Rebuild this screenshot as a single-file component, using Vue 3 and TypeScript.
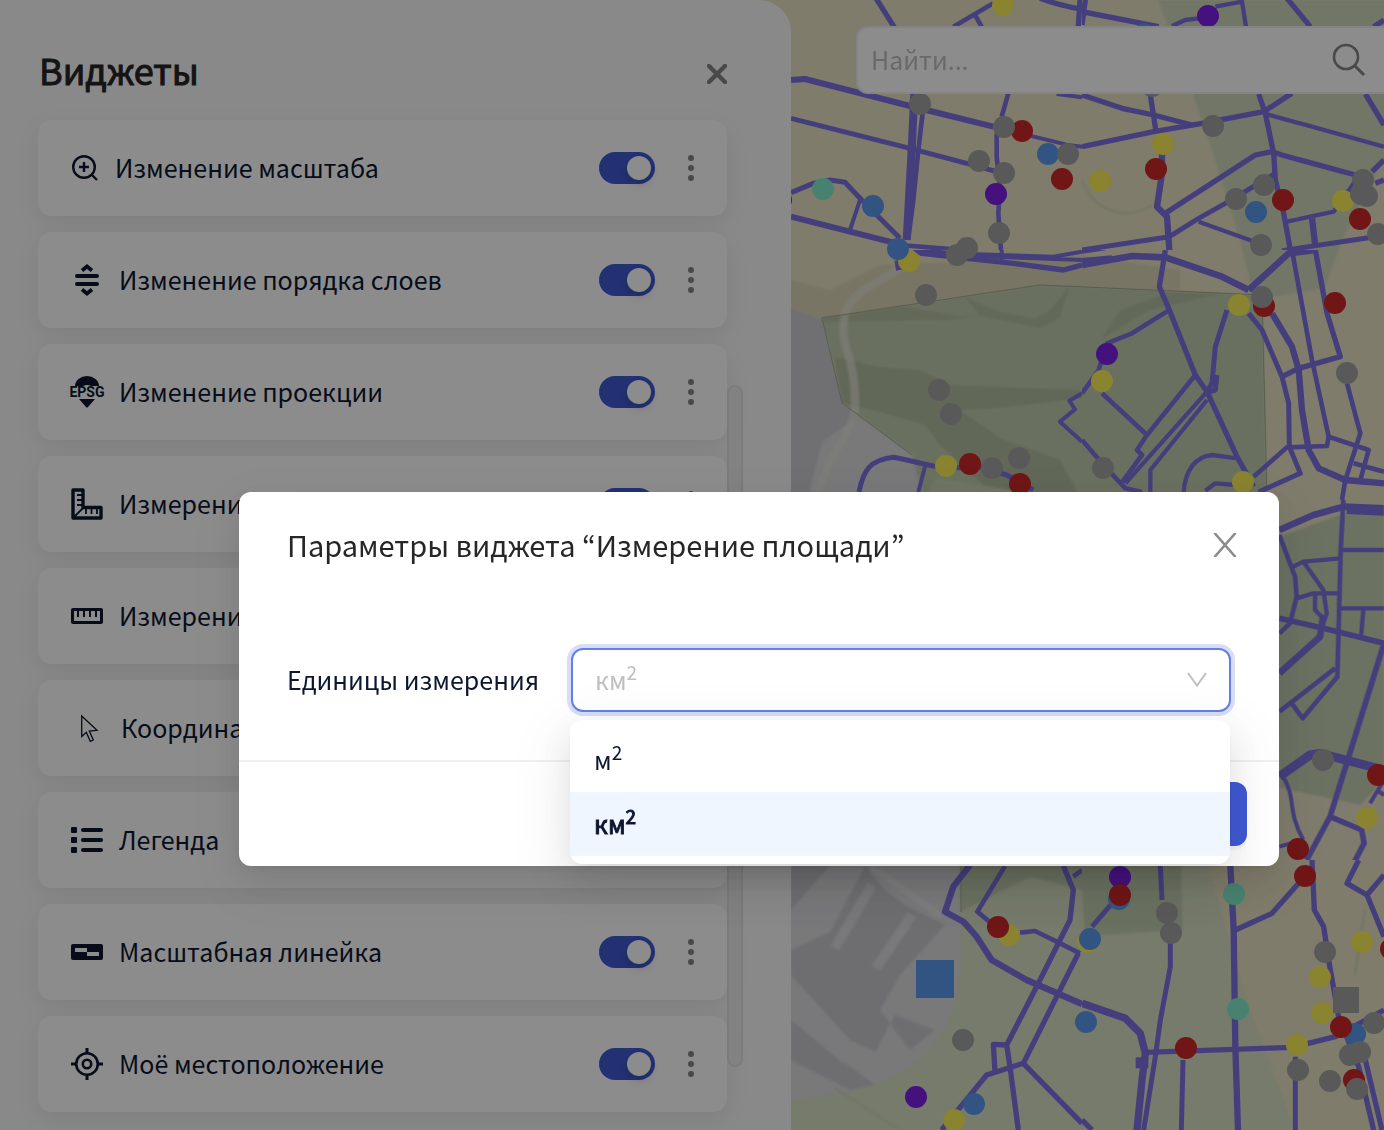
<script setup lang="ts">
import { ref } from 'vue'

interface Widget {
  id: string
  title: string
  iconWidth: number
  enabled: boolean
}

interface Road {
  w: number
  d: string
}

interface Tile {
  x: number
  y: number
  w: number
  h: number
  roads: Road[]
}

type Point = [number, number]

const widgets = ref<Widget[]>([
  { id: 'zoom', title: 'Изменение масштаба', iconWidth: 28, enabled: true },
  { id: 'order', title: 'Изменение порядка слоев', iconWidth: 32, enabled: true },
  { id: 'epsg', title: 'Изменение проекции', iconWidth: 32, enabled: true },
  { id: 'area', title: 'Измерение площади', iconWidth: 32, enabled: true },
  { id: 'length', title: 'Измерение расстояния', iconWidth: 32, enabled: true },
  { id: 'cursor', title: 'Координаты курсора', iconWidth: 34, enabled: true },
  { id: 'legend', title: 'Легенда', iconWidth: 32, enabled: true },
  { id: 'scale', title: 'Масштабная линейка', iconWidth: 32, enabled: true },
  { id: 'location', title: 'Моё местоположение', iconWidth: 32, enabled: true },
])

const units = [
  { value: 'm2', base: 'м' },
  { value: 'km2', base: 'км' },
]
const unit = ref('km2')
const query = ref('')

// Road geometry is stored per tile, in thirds of a map unit.
const tiles: Tile[] = [
  {
    x: 780, y: 0, w: 302, h: 250,
    roads: [
      { w: 14, d: 'M285-10 345 85M780-5C820 10 860 20 906 28M900 0 895 80' },
      { w: 12, d: 'M520 80 640 10M585 45 605 80M685 280 665 350M650 400V470L660 560 655 640 663 750' },
      { w: 16, d: 'M33 240 75 237 390 318 640 380M33 650 210 695 350 730' },
      { w: 10, d: 'M700 395 860 434 906 440M830 282 906 292M240 600 210 690' },
      { w: 13, d: 'M33 355 390 445 560 490 650 515M33 578 100 550 150 540 195 547 245 600 290 645 360 715' },
      { w: 22, d: 'M403 280 395 450 380 720' },
      { w: 12, d: 'M430 320 415 450 400 600 385 715M360 735 520 748' },
    ],
  },
  {
    x: 1082, y: 0, w: 302, h: 250,
    roads: [
      { w: 14, d: 'M0 35 230 80M10 0 0 75M615-5 685 80M906 60 875 80M0 285 120 325 215 345 330 375M205 285 222 395' },
      { w: 11, d: 'M270 78 310 60 350 55M400 20 480 5 492 80M545 340 906 440M350 665 560 740M615 665 755 635 800 570' },
      { w: 14, d: 'M0 440 215 395 360 370 545 335 630 280M850 282 906 375M530 282 550 340 575 460 580 540 605 640 625 750' },
      { w: 14, d: 'M250 640 520 465 570 455 600 465 820 525M800 575 830 530M870 515 906 480M880 550 906 540' },
      { w: 17, d: 'M240 460V520L225 620 255 650 262 750M690 655 700 740' },
      { w: 13, d: 'M0 750 262 710 350 655 430 610 580 520M600 752 880 710' },
    ],
  },
  {
    x: 780, y: 250, w: 302, h: 250,
    roads: [
      { w: 10, d: 'M400 5 500 15 906 30M500 10 820 20 906 5M665 0V30M906 430 868 452 885 478 840 515 906 575M435 650 415 726' },
      { w: 14, d: 'M410 5 560 25 700 40 850 60 906 45' },
      { w: 22, d: 'M355 30 360 60M420 5 500 14' },
      { w: 13, d: 'M237 726C250 660 270 630 340 622 390 630 430 645 500 655L600 650 680 675 760 720' },
    ],
  },
  {
    x: 1082, y: 250, w: 302, h: 250,
    roads: [
      { w: 18, d: 'M0 45 150 18 250 22 420 80 500 120M500 120 620 10 700 0' },
      { w: 10, d: 'M0 5 90-8M0 30 90 22' },
      { w: 14, d: 'M250 0 232 110 262 180 340 375 375 425 465 620 515 710M700 0 735 190 775 320 650 355 600 380' },
      { w: 12, d: 'M262 180 150 250 75 280 50 360 0 430M60 430 195 555M340 375 195 555 165 600 180 615 118 700M0 570 60 640 130 715 180 726' },
      { w: 11, d: 'M375 425 130 700M375 450 205 660V726M305 726C310 660 340 620 390 615L465 625M370 722 400 700 460 705' },
      { w: 13, d: 'M435 180 400 290 390 400 375 425M405 375 400 420 375 428M500 190 540 240 600 380 620 460 622 590 655 670 530 726' },
      { w: 17, d: 'M570 190 630 290 650 360 660 480 680 600 710 655 790 690 906 700' },
      { w: 12, d: 'M630 0 690 330 740 560 735 588 615 592 515 680M795 400 835 550 790 690 780 750M740 560 860 600 835 690M815 640 906 665' },
    ],
  },
  {
    x: 1000, y: 500, w: 384, h: 360,
    roads: [
      { w: 18, d: 'M838 90 940 45 1030 20 1152 25M970 345 960 410 838 520' },
      { w: 12, d: 'M1040 35 1152 40M1033-60 1022 150 1012 530 908 655 875 610M1005 505 838 635M838 105 885 230 890 290 870 370 838 400' },
      { w: 11, d: 'M1025 150H1152M880 200 910 185 1020 175M910 185 970 270 980 340 960 400M890 295 940 280H1015M945 280V330L965 350V380M1015 325H1152M1090 330 1083 410' },
      { w: 15, d: 'M838 355 970 385 1152 430 1040 790 990 950 920 1080M990 950 1085 990 1092 1030 1035 1140' },
      { w: 25, d: 'M838 830 930 765 960 760 1152 810' },
      { w: 10, d: 'M850 830C890 900 860 930 910 1020M838 1040 890 1025M1152 840 1110 910M1130 870 1152 885' },
    ],
  },
  {
    x: 780, y: 860, w: 302, h: 270,
    roads: [
      { w: 17, d: 'M570 15 520 80 495 155 550 185 590 230 635 300 740 360 906 432' },
      { w: 12, d: 'M675 18 592 155 640 195M720 218 765 213 830 245 900 280M880 50 906 30' },
      { w: 14, d: 'M850 18 880 90 870 180 770 380 680 555 640 553 645 635M680 555 690 620 715 810M895 280 730 610 620 645 550 730 485 810M730 610 906 790' },
    ],
  },
  {
    x: 1082, y: 860, w: 302, h: 270,
    roads: [
      { w: 13, d: 'M30 200 90 130M235 18 240 120M265 240V320L235 480 220 590 185 810M303 600 298 810M640 590V810' },
      { w: 20, d: 'M0 430 130 475 175 520 190 580 180 660 165 810' },
      { w: 36, d: 'M180 592V625' },
      { w: 14, d: 'M190 577 630 562 760 530 906 450M460 210 570 160 650 70M830 0 795 70 855 105 906 45M855 105 906 230M0 780 30 810' },
      { w: 17, d: 'M445 18 455 210 460 560 468 810' },
      { w: 14, d: 'M690 0 697 150 725 200 740 300 770 470 830 620 875 810M850 600 900 810' },
    ],
  },
]

const layers: { color: string; points: Point[] }[] = [
  { color: '#7c20e8', points: [[1208, 16], [996, 194], [1107, 354], [1120, 877], [916, 1097]] },
  { color: '#5c9aee', points: [[1144, 34], [1048, 154], [873, 206], [1256, 212], [1119, 899], [1086, 1022], [1355, 1034]] },
  {
    color: '#fbee58',
    points: [[1003, 5], [1163, 144], [1100, 181], [1343, 201], [909, 261], [1239, 305], [1102, 381], [946, 466], [1243, 482],
      [1367, 818], [1009, 935], [1088, 942], [1362, 942], [1320, 977], [1322, 1013], [1297, 1045], [954, 1120]],
  },
  {
    color: '#cc2828',
    points: [[1022, 131], [1156, 169], [1062, 179], [1283, 200], [1360, 219], [781, 200], [1264, 306], [1335, 303], [970, 464],
      [1020, 484], [1378, 775], [1298, 849], [1305, 876], [1120, 895], [998, 927], [1391, 949], [1341, 1027], [1186, 1048], [1354, 1080]],
  },
  { color: '#84eccc', points: [[823, 189], [1234, 894], [1238, 1009]] },
  { color: '#5c9aee', points: [[898, 249], [1090, 939], [974, 1104]] },
  {
    color: '#a3a3a3',
    points: [[920, 104], [1004, 127], [1068, 154], [979, 161], [1004, 173], [1213, 126], [1152, 86], [1264, 185], [1236, 199],
      [999, 233], [967, 248], [957, 255], [1261, 245], [1363, 180], [1361, 194], [1367, 196], [1378, 234], [926, 295], [1262, 297],
      [939, 390], [951, 414], [1347, 373], [1103, 468], [992, 468], [1019, 458], [1323, 760], [1167, 913], [1171, 933], [963, 1040],
      [1325, 952], [1374, 1023], [1350, 1055], [1360, 1052], [1298, 1070], [1330, 1081], [1357, 1089]],
  },
]
</script>

<template>
  <div class="app">
    <svg class="map" viewBox="0 0 1384 1130" preserveAspectRatio="xMaxYMin slice" aria-hidden="true">
      <defs>
        <filter id="soft"><feGaussianBlur stdDeviation="1" /></filter>
      </defs>
      <rect width="1384" height="1130" fill="#e8e2c3" />
      <g filter="url(#soft)">
        <path d="M1158 0 1192 92 1212 150 1240 240 1255 300 1325 288 1342 240 1400 130V0z" fill="#cfd8bc" />
        <path d="M791 280 830 290 880 265 960 262 1080 255 1180 270 1180 290 791 320z" fill="#ddd5b8" />
        <path d="M780 305 822 319 842 403 912 455 925 500H780z" fill="#ccccd1" />
        <path d="M809 492 822 442 860 415 912 453 922 500z" fill="#dcdcdf" />
        <path d="M822 318 1040 285 1262 295 1267 500H925L912 455 842 403z" fill="#c0cdae" />
        <path d="M835 357 880 367 920 370 950 385 1082 390 1082 398 1000 408 960 410 1000 438 1060 460 1082 500H1000L940 445 925 425 880 412 842 403z" fill="#b2bda0" />
        <path d="M822 318 900 306 960 316 985 315 950 320 822 322zM965 297 1000 312 1035 318 1050 310 1070 285 1060 318 1040 328 980 316zM1100 340 1150 310 1225 293 1170 292 1120 310z" fill="#b5c0a3" />
        <path d="M900 268C885 280 850 290 845 315 838 345 855 355 855 400 858 430 828 450 816 500" fill="none" stroke="#e4e5da" stroke-width="8" stroke-opacity="0.7" />
        <path d="M925 500 935 478 1000 488 1040 500z" fill="#cbd5b8" />
        <path d="M1270 540 1340 515 1384 505V780L1360 805 1280 788z" fill="#c3cfb2" />
        <path d="M1280 788 1360 805 1384 850V870H1280z" fill="#e8e2c8" />
        <path d="M780 860H1240L1208 866 1250 1010 1295 1130H780z" fill="#d9e0c3" />
        <path d="M960 860H1181L1183 930 1085 936 1082 890 1030 877 960 912z" fill="#c2ceb0" />
        <path d="M780 860H960L961 960C955 1060 900 1090 780 1101z" fill="#dcdcdf" />
        <path d="M791 860H835L791 910zM865 866 885 890 905 905 945 925 900 975 880 1010 910 1050 935 1030 895 1015 875 1052 850 1040 791 975V950L830 932z" fill="#c9c9ce" />
        <path d="M791 1020 830 1052 875 1085 850 1090 791 1060z" fill="#c9c9ce" />
        <path d="M835 948 872 885M876 968 912 915M845 1060 800 1000" fill="none" stroke="#dcdce0" stroke-width="10" />
        <path d="M870 866 940 915" fill="none" stroke="#e4e4e6" stroke-width="7" />
        <path d="M835 1088 900 1130M1082 180C1095 215 1130 220 1152 205M1365 910 1355 975" fill="none" stroke="#cdd3b8" stroke-width="2" />
      </g>
      <path d="M1040 285 822 318 842 403 912 455M1040 285 1262 295 1267 500M961 866V912" fill="none" stroke="#a3ac92" stroke-width="1" />
      <g class="roads">
        <svg v-for="(tile, i) in tiles" :key="i" :x="tile.x" :y="tile.y" :width="tile.w" :height="tile.h" :viewBox="`0 0 ${tile.w * 3} ${tile.h * 3}`">
          <path v-for="(road, j) in tile.roads" :key="j" class="road" :d="road.d" :stroke-width="road.w + 2" />
        </svg>
      </g>
      <g v-for="(layer, i) in layers" :key="i" :fill="layer.color">
        <circle v-for="([x, y], j) in layer.points" :key="j" :cx="x" :cy="y" r="11" />
      </g>
      <rect x="916" y="960" width="38" height="38" fill="#5c9aee" />
      <rect x="1333" y="987" width="26" height="26" fill="#a3a3a3" />
    </svg>

    <aside class="panel">
      <header class="panel-head">
        <h1>Виджеты</h1>
        <button class="icon-btn" type="button" aria-label="Закрыть">
          <svg width="20" height="20" viewBox="0 0 20 20"><path d="M2 2 18 18M18 2 2 18" stroke="#858585" stroke-width="4.4" stroke-linecap="round" /></svg>
        </button>
      </header>
      <div class="scroll">
        <ul class="cards">
          <li v-for="widget in widgets" :key="widget.id" class="card">
            <svg v-if="widget.id === 'zoom'" :width="widget.iconWidth" height="32" viewBox="0 0 28 32" class="line">
              <circle cx="13" cy="15" r="10.8" stroke-width="2.4" /><path d="M8 15H18M13 10V20M21 23 26 28" stroke-width="2.4" />
            </svg>
            <svg v-else-if="widget.id === 'order'" :width="widget.iconWidth" height="32" viewBox="0 0 32 32" class="line">
              <path d="M6 12H26M6 20H26" stroke-width="4" stroke-linecap="round" /><path d="M11 6.500 16 2.500 21 6.500M11 25.500 16 29.500 21 25.500" stroke-width="3.800" />
            </svg>
            <svg v-else-if="widget.id === 'epsg'" :width="widget.iconWidth" height="32" viewBox="0 0 32 32" class="solid">
              <path d="M4 10A12 10 0 0 1 28 10H20Q16 8 12 10zM8 23H24L17 31Q16 32 15 31z" />
              <text x="16" y="21" text-anchor="middle" class="epsg">EPSG</text>
            </svg>
            <svg v-else-if="widget.id === 'area'" :width="widget.iconWidth" height="32" viewBox="0 0 32 32" class="line">
              <path d="M2 2H12V19.500H30V30H2z" stroke-width="3.400" stroke-linejoin="round" />
              <path d="M6 7H12M6 12H12M6 17H12M15 20V26M20.500 20V26M26 20V26M3 29 12 20" stroke-width="1.800" />
            </svg>
            <svg v-else-if="widget.id === 'length'" :width="widget.iconWidth" height="32" viewBox="0 0 32 32" class="line">
              <rect x="1.500" y="9.500" width="29" height="13" rx="0.500" stroke-width="3" stroke-linejoin="round" />
              <path d="M7 10V17M13 10V17M19 10V17M25 10V17" stroke-width="2" />
            </svg>
            <svg v-else-if="widget.id === 'cursor'" :width="widget.iconWidth" height="32" viewBox="0 0 34 32" class="line">
              <path d="M10.700 4V24.500L15.300 20.300 19.300 29.300 22.300 28 18.300 19 26 18.300z" stroke-width="1.300" />
            </svg>
            <svg v-else-if="widget.id === 'legend'" :width="widget.iconWidth" height="32" viewBox="0 0 32 32" class="solid">
              <g v-for="y in [3, 13, 23]" :key="y">
                <rect x="0" :y="y" width="6" height="6" rx="1" /><rect x="10" :y="y + 1" width="22" height="4" rx="2" />
              </g>
            </svg>
            <svg v-else-if="widget.id === 'scale'" :width="widget.iconWidth" height="32" viewBox="0 0 32 32" class="solid">
              <path fill-rule="evenodd" d="M2 8H30Q32 8 32 10V22Q32 24 30 24H2Q0 24 0 22V10Q0 8 2 8zM4 12V16H16V12zM16 16V20H28V16z" />
            </svg>
            <svg v-else :width="widget.iconWidth" height="32" viewBox="0 0 32 32" class="line">
              <circle cx="16" cy="16" r="10.800" stroke-width="2.600" /><circle cx="16" cy="16" r="4.200" stroke-width="2.600" />
              <path d="M16 0V5M16 27V32M0 16H5M27 16H32" stroke-width="3" />
            </svg>
            <label class="card-title" :for="`w-${widget.id}`">{{ widget.title }}</label>
            <input :id="`w-${widget.id}`" v-model="widget.enabled" class="switch" type="checkbox" role="switch" />
            <button class="icon-btn" type="button" aria-label="Ещё">
              <svg width="8" height="28" viewBox="0 0 8 28" fill="#858585"><circle cx="4" cy="4" r="3" /><circle cx="4" cy="14" r="3" /><circle cx="4" cy="24" r="3" /></svg>
            </button>
          </li>
        </ul>
        <div class="thumb"></div>
      </div>
    </aside>

    <form class="search" role="search" @submit.prevent>
      <input v-model="query" type="text" placeholder="Найти..." aria-label="Найти" />
      <button class="icon-btn" type="submit" aria-label="Искать">
        <svg width="34" height="34" viewBox="0 0 34 34" fill="none" stroke="#858585" stroke-width="2.600"><circle cx="14" cy="14" r="12" /><path d="M22.500 22.500 32 32" stroke-width="3" /></svg>
      </button>
    </form>

    <div class="backdrop">
      <section class="modal" role="dialog" aria-labelledby="modal-title">
        <header class="modal-head">
          <h2 id="modal-title">Параметры виджета “Измерение площади”</h2>
          <button class="icon-btn" type="button" aria-label="Закрыть">
            <svg width="24" height="24" viewBox="0 0 24 24"><path d="M1.500 0 22.500 24M22.500 0 1.500 24" stroke="#8c8c8c" stroke-width="2.600" /></svg>
          </button>
        </header>
        <div class="modal-body">
          <label for="unit">Единицы измерения</label>
          <div class="field">
            <select id="unit" v-model="unit">
              <option v-for="item in units" :key="item.value" :value="item.value">{{ item.base }}²</option>
            </select>
            <span class="value" aria-hidden="true">{{ units.find((u) => u.value === unit)?.base }}<sup>2</sup></span>
            <svg class="arrow" width="20" height="16" viewBox="0 0 20 16" fill="none"><path d="M1 1 10 13.500 19 1" stroke="#bfbfbf" stroke-width="2" /></svg>
            <ul class="options" role="listbox" aria-label="Единицы измерения">
              <li v-for="item in units" :key="item.value" role="option" :aria-selected="item.value === unit" :class="{ selected: item.value === unit }" @click="unit = item.value">
                <span>{{ item.base }}<sup>2</sup></span>
              </li>
            </ul>
          </div>
        </div>
        <footer class="modal-foot">
          <button class="save" type="button" aria-label="Сохранить"></button>
        </footer>
      </section>
    </div>
  </div>
</template>

<style>
body {
  margin: 0;
  overflow: hidden;
}
</style>

<style scoped>
.app {
  display: grid;
  grid-template-columns: minmax(0, 791px) minmax(0, 1fr);
  height: 100vh;
  overflow: hidden;
  font-family: 'Noto Sans CJK KR', 'Noto Sans', sans-serif;
  font-size: 25px;
  line-height: 40px;
  color: #0d1730;
}

.app *,
.app *::before {
  box-sizing: border-box;
}

.map {
  grid-area: 1 / 1 / 2 / 3;
  width: 100%;
  height: 100vh;
}

.roads {
  filter: blur(0.6px);
}

.road {
  fill: none;
  stroke: #7d72e2;
  stroke-linejoin: round;
}

.icon-btn {
  display: flex;
  padding: 0;
  border: 0;
  background: none;
}

.panel {
  grid-area: 1 / 1 / 2 / 2;
  z-index: 1;
  height: 100vh;
  overflow: hidden;
  padding: 48px 48px 0 38px;
  background: #f9f9f9;
  border-top-right-radius: 32px;
}

.panel-head {
  display: flex;
  align-items: center;
  justify-content: space-between;
  height: 52px;
  margin-bottom: 20px;
  padding-right: 16px;
}

h1 {
  margin: 0;
  padding: 0 0 10px 1px;
  font-size: 36px;
  line-height: 42px;
  font-weight: 400;
  -webkit-text-stroke: 1px;
  color: #262626;
}

.scroll {
  display: flex;
}

.cards {
  display: flex;
  flex: 1;
  flex-direction: column;
  gap: 16px;
  margin: 0;
  padding: 0;
  list-style: none;
}

.card {
  display: flex;
  align-items: center;
  height: 96px;
  padding: 0 32px 0 33px;
  background: #fff;
  border-radius: 14px;
  box-shadow: 0 8px 24px rgba(0, 0, 0, 0.07);
}

.card > svg {
  flex: none;
  overflow: visible;
}

.line {
  fill: none;
  stroke: #0d1730;
}

.solid {
  fill: #0d1730;
}

.epsg {
  font: 700 14px Roboto, sans-serif;
}

.card-title {
  flex: 1;
  margin-left: 16px;
  padding-bottom: 2px;
}

.switch {
  appearance: none;
  width: 56px;
  height: 32px;
  margin: 0 32px 0 0;
  padding: 4px;
  border-radius: 16px;
  background: #405ad4;
}

.switch::before {
  content: '';
  display: block;
  width: 24px;
  height: 24px;
  margin-left: 24px;
  border-radius: 50%;
  background: #fff;
  box-shadow: 0 4px 8px rgba(0, 35, 11, 0.2);
}

.thumb {
  width: 16px;
  height: 682px;
  margin-top: 265px;
  border: 2px solid #e0e0e0;
  border-radius: 8px;
  background: #ededed;
}

.search {
  grid-area: 1 / 2 / 2 / 3;
  z-index: 1;
  display: flex;
  align-items: center;
  justify-content: space-between;
  height: 68px;
  margin: 26px 0 0 65px;
  padding: 0 18px 0 13px;
  background: #fff;
  border: 2px solid #f0f0f3;
  border-right: 0;
  border-radius: 12px 0 0 12px;
}

.search input {
  flex: 1;
  min-width: 0;
  padding: 0 0 2px;
  border: 0;
  outline: 0;
  background: none;
  font: inherit;
}

.search input::placeholder {
  color: #bfbfbf;
}

.backdrop {
  position: fixed;
  inset: 0;
  z-index: 2;
  display: flex;
  align-items: flex-start;
  padding: 492px 105px 0 239px;
  background: rgba(0, 0, 0, 0.45);
}

.modal {
  flex: 1;
  background: #fff;
  border-radius: 12px;
  box-shadow: 0 6px 12px -8px rgba(0, 0, 0, 0.12), 0 12px 32px rgba(0, 0, 0, 0.08), 0 18px 56px 16px rgba(0, 0, 0, 0.05);
}

.modal-head {
  display: flex;
  align-items: center;
  justify-content: space-between;
  height: 108px;
  padding: 0 42px 2px 48px;
}

h2 {
  margin: 0;
  padding-bottom: 2px;
  font-size: 29px;
  line-height: 44px;
  font-weight: 400;
  color: #262626;
}

.modal-body {
  display: flex;
  align-items: center;
  justify-content: space-between;
  padding: 48px;
  border-bottom: 2px solid #f0f0f0;
}

.modal-body label {
  padding-bottom: 2px;
}

.field {
  position: relative;
  width: 660px;
}

select {
  display: block;
  appearance: none;
  width: 100%;
  height: 64px;
  padding: 0 24px;
  border: 2px solid #6480e6;
  border-radius: 12px;
  outline: 0;
  background: #fff;
  box-shadow: 0 0 0 4px #d7def6;
  font: inherit;
  color: transparent;
}

sup {
  font-size: 19px;
  line-height: 0;
  vertical-align: 10px;
}

.value {
  position: absolute;
  top: 11px;
  left: 24px;
  color: #bfbfbf;
  pointer-events: none;
}

.arrow {
  position: absolute;
  top: 24px;
  right: 24px;
  pointer-events: none;
}

.options {
  position: absolute;
  top: 72px;
  right: 1px;
  left: -1px;
  margin: 0;
  padding: 8px 0;
  list-style: none;
  background: #fff;
  border-radius: 12px;
  box-shadow: 0 6px 12px -8px rgba(0, 0, 0, 0.12), 0 12px 32px rgba(0, 0, 0, 0.08), 0 18px 56px 16px rgba(0, 0, 0, 0.05);
}

.options li {
  display: flex;
  align-items: center;
  height: 64px;
  padding: 0 24px 2px;
}

.options .selected {
  background: #eff6ff;
  -webkit-text-stroke: 1px;
}

.modal-foot {
  display: flex;
  justify-content: flex-end;
  padding: 20px 32px;
}

.save {
  width: 180px;
  height: 64px;
  border: 0;
  border-radius: 12px;
  background: #405ad4;
  box-shadow: 0 4px 0 rgba(0, 0, 0, 0.04);
}
</style>
